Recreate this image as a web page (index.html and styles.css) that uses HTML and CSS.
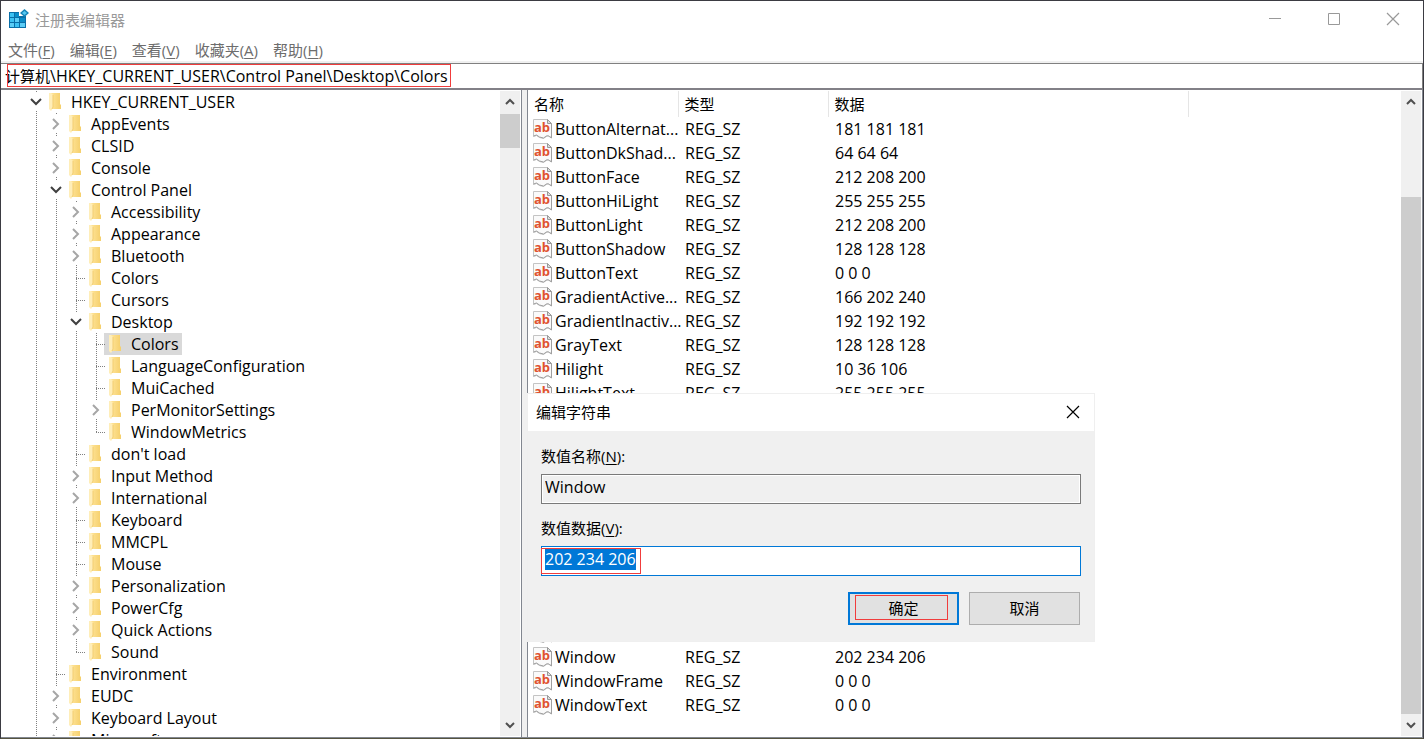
FILE: index.html
```html
<!DOCTYPE html>
<html lang="zh-CN">

<head>
    <meta charset="UTF-8">
    <meta name="viewport" content="width=device-width, initial-scale=1.0">
    <title>注册表编辑器</title>
    <link rel="stylesheet" href="styles.css">
</head>

<body>
    <!-- shared icons -->
    <svg class="defs" aria-hidden="true">
        <linearGradient id="folderFill" x1="0" x2="1" y1="0" y2="0">
            <stop offset="0" stop-color="#ffe498" />
            <stop offset="1" stop-color="#f5cf6b" />
        </linearGradient>
        <symbol id="folder" viewBox="0 0 12 18">
            <path d="M2 0h9v11l1 1v4H2z" fill="url(#folderFill)" />
            <path d="M0 0h2l2 2v13l-2 3-2-2z" fill="#ffeeb9" />
            <path d="M4 2v12l-1 2" fill="none" stroke="#f2cd70" stroke-width="1" />
        </symbol>
        <symbol id="open" viewBox="0 0 12 8">
            <path d="M1 1l5 5 5-5" fill="none" stroke="#404040" stroke-width="2" />
        </symbol>
        <symbol id="closed" viewBox="0 0 8 12">
            <path d="M1 1l5 5-5 5" fill="none" stroke="#a6a6a6" stroke-width="2" />
        </symbol>
        <symbol id="up" viewBox="0 0 10 8">
            <path d="M1 6l4-4 4 4" fill="none" stroke="#505050" stroke-width="2" />
        </symbol>
        <symbol id="down" viewBox="0 0 10 8">
            <path d="M1 2l4 4 4-4" fill="none" stroke="#505050" stroke-width="2" />
        </symbol>
        <symbol id="string" viewBox="0 0 20 20">
            <path d="M.5 .5h14l4 4v14l-2-1-2-1-4 3-4-1-3-2-3 1z" fill="#fafafa" stroke="#c4c4c4" />
            <path d="M18.500 5v14l-3-2-2 0-3 2-4-1-3-2-3 1" fill="none" stroke="#a0a0a0" />
            <path d="M14.500 .5v4h4z" fill="#ddd" stroke="#999" />
            <text x="9" y="13" text-anchor="middle" class="ab">ab</text>
        </symbol>
        <symbol id="close" viewBox="0 0 14 14">
            <path d="M1 1l12 12M13 1L1 13" fill="none" stroke="currentColor" stroke-width="1.200" />
        </symbol>
    </svg>

    <div class="window">
        <header class="titlebar">
            <svg class="app-icon" viewBox="0 0 20 20">
                <path d="M0 3h10v4h7v12H0z" fill="#0a6fa8" />
                <path d="M1 4h4v4H1zM1 9h4v4H1zM6 14h4v4H6z" fill="#3dc1f2" />
                <path d="M6 9h4v4H6zM11 14h5v4h-5zM1 14h4v4H1z" fill="#5ccdf6" />
                <path d="M6 4h4v4H6zM11 9h5v4h-5z" fill="#0a8dc9" />
                <path d="M15.500 0L20 4l-4.500 4L11 4z" fill="#1584b8" />
                <path d="M15.500 2L18 4l-2.500 2L13 4z" fill="#55c8f2" />
            </svg>
            <h1>注册表编辑器</h1>
            <div class="window-buttons">
                <button aria-label="最小化"><svg viewBox="0 0 14 14"><path d="M1 6.500h12" stroke="currentColor" /></svg></button>
                <button aria-label="最大化"><svg viewBox="0 0 14 14"><path d="M1.500 1.500h11v11h-11z" fill="none" stroke="currentColor" /></svg></button>
                <button aria-label="关闭"><svg><use href="#close" /></svg></button>
            </div>
        </header>

        <nav class="menubar">
            <button>文件(<u>F</u>)</button>
            <button>编辑(<u>E</u>)</button>
            <button>查看(<u>V</u>)</button>
            <button>收藏夹(<u>A</u>)</button>
            <button>帮助(<u>H</u>)</button>
        </nav>

        <div class="address">
            <span class="cjk">计算机</span>\HKEY_CURRENT_USER\Control Panel\Desktop\Colors
            <span class="mark mark-address"></span>
        </div>

        <main class="panes">
            <section class="tree-pane">
                <div class="tree-scroll">
                    <ul class="tree">
                        <li><div class="node"><button class="toggle open" aria-label="折叠"><svg><use href="#open" /></svg></button><svg class="folder"><use href="#folder" /></svg><span>HKEY_CURRENT_USER</span></div>
                            <ul>
                                <li><div class="node"><button class="toggle" aria-label="展开"><svg><use href="#closed" /></svg></button><svg class="folder"><use href="#folder" /></svg><span>AppEvents</span></div></li>
                                <li><div class="node"><button class="toggle" aria-label="展开"><svg><use href="#closed" /></svg></button><svg class="folder"><use href="#folder" /></svg><span>CLSID</span></div></li>
                                <li><div class="node"><button class="toggle" aria-label="展开"><svg><use href="#closed" /></svg></button><svg class="folder"><use href="#folder" /></svg><span>Console</span></div></li>
                                <li><div class="node"><button class="toggle open" aria-label="折叠"><svg><use href="#open" /></svg></button><svg class="folder"><use href="#folder" /></svg><span>Control Panel</span></div>
                                    <ul>
                                        <li><div class="node"><button class="toggle" aria-label="展开"><svg><use href="#closed" /></svg></button><svg class="folder"><use href="#folder" /></svg><span>Accessibility</span></div></li>
                                        <li><div class="node"><button class="toggle" aria-label="展开"><svg><use href="#closed" /></svg></button><svg class="folder"><use href="#folder" /></svg><span>Appearance</span></div></li>
                                        <li><div class="node"><button class="toggle" aria-label="展开"><svg><use href="#closed" /></svg></button><svg class="folder"><use href="#folder" /></svg><span>Bluetooth</span></div></li>
                                        <li><div class="node leaf"><svg class="folder"><use href="#folder" /></svg><span>Colors</span></div></li>
                                        <li><div class="node leaf"><svg class="folder"><use href="#folder" /></svg><span>Cursors</span></div></li>
                                        <li><div class="node"><button class="toggle open" aria-label="折叠"><svg><use href="#open" /></svg></button><svg class="folder"><use href="#folder" /></svg><span>Desktop</span></div>
                                            <ul>
                                                <li><div class="node leaf selected"><svg class="folder"><use href="#folder" /></svg><span>Colors</span></div></li>
                                                <li><div class="node leaf"><svg class="folder"><use href="#folder" /></svg><span>LanguageConfiguration</span></div></li>
                                                <li><div class="node leaf"><svg class="folder"><use href="#folder" /></svg><span>MuiCached</span></div></li>
                                                <li><div class="node"><button class="toggle" aria-label="展开"><svg><use href="#closed" /></svg></button><svg class="folder"><use href="#folder" /></svg><span>PerMonitorSettings</span></div></li>
                                                <li><div class="node leaf"><svg class="folder"><use href="#folder" /></svg><span>WindowMetrics</span></div></li>
                                            </ul>
                                        </li>
                                        <li><div class="node leaf"><svg class="folder"><use href="#folder" /></svg><span>don't load</span></div></li>
                                        <li><div class="node"><button class="toggle" aria-label="展开"><svg><use href="#closed" /></svg></button><svg class="folder"><use href="#folder" /></svg><span>Input Method</span></div></li>
                                        <li><div class="node"><button class="toggle" aria-label="展开"><svg><use href="#closed" /></svg></button><svg class="folder"><use href="#folder" /></svg><span>International</span></div></li>
                                        <li><div class="node leaf"><svg class="folder"><use href="#folder" /></svg><span>Keyboard</span></div></li>
                                        <li><div class="node leaf"><svg class="folder"><use href="#folder" /></svg><span>MMCPL</span></div></li>
                                        <li><div class="node leaf"><svg class="folder"><use href="#folder" /></svg><span>Mouse</span></div></li>
                                        <li><div class="node"><button class="toggle" aria-label="展开"><svg><use href="#closed" /></svg></button><svg class="folder"><use href="#folder" /></svg><span>Personalization</span></div></li>
                                        <li><div class="node"><button class="toggle" aria-label="展开"><svg><use href="#closed" /></svg></button><svg class="folder"><use href="#folder" /></svg><span>PowerCfg</span></div></li>
                                        <li><div class="node"><button class="toggle" aria-label="展开"><svg><use href="#closed" /></svg></button><svg class="folder"><use href="#folder" /></svg><span>Quick Actions</span></div></li>
                                        <li><div class="node leaf"><svg class="folder"><use href="#folder" /></svg><span>Sound</span></div></li>
                                    </ul>
                                </li>
                                <li><div class="node leaf"><svg class="folder"><use href="#folder" /></svg><span>Environment</span></div></li>
                                <li><div class="node"><button class="toggle" aria-label="展开"><svg><use href="#closed" /></svg></button><svg class="folder"><use href="#folder" /></svg><span>EUDC</span></div></li>
                                <li><div class="node"><button class="toggle" aria-label="展开"><svg><use href="#closed" /></svg></button><svg class="folder"><use href="#folder" /></svg><span>Keyboard Layout</span></div></li>
                                <li><div class="node"><button class="toggle" aria-label="展开"><svg><use href="#closed" /></svg></button><svg class="folder"><use href="#folder" /></svg><span>Microsoft</span></div></li>
                            </ul>
                        </li>
                    </ul>
                </div>
                <div class="scrollbar">
                    <button aria-label="向上滚动"><svg><use href="#up" /></svg></button>
                    <div class="track"><div class="thumb thumb-tree"></div></div>
                    <button aria-label="向下滚动"><svg><use href="#down" /></svg></button>
                </div>
            </section>

            <section class="list-pane">
                <div class="list-scroll">
                    <table class="values">
                        <colgroup>
                            <col class="col-name">
                            <col class="col-type">
                            <col class="col-data">
                            <col>
                        </colgroup>
                        <thead>
                            <tr><th>名称</th><th>类型</th><th>数据</th><td></td></tr>
                        </thead>
                        <tbody>
                            <tr><td><svg><use href="#string" /></svg>ButtonAlternat...</td><td>REG_SZ</td><td>181 181 181</td></tr>
                            <tr><td><svg><use href="#string" /></svg>ButtonDkShad...</td><td>REG_SZ</td><td>64 64 64</td></tr>
                            <tr><td><svg><use href="#string" /></svg>ButtonFace</td><td>REG_SZ</td><td>212 208 200</td></tr>
                            <tr><td><svg><use href="#string" /></svg>ButtonHiLight</td><td>REG_SZ</td><td>255 255 255</td></tr>
                            <tr><td><svg><use href="#string" /></svg>ButtonLight</td><td>REG_SZ</td><td>212 208 200</td></tr>
                            <tr><td><svg><use href="#string" /></svg>ButtonShadow</td><td>REG_SZ</td><td>128 128 128</td></tr>
                            <tr><td><svg><use href="#string" /></svg>ButtonText</td><td>REG_SZ</td><td>0 0 0</td></tr>
                            <tr><td><svg><use href="#string" /></svg>GradientActive...</td><td>REG_SZ</td><td>166 202 240</td></tr>
                            <tr><td><svg><use href="#string" /></svg>GradientInactiv...</td><td>REG_SZ</td><td>192 192 192</td></tr>
                            <tr><td><svg><use href="#string" /></svg>GrayText</td><td>REG_SZ</td><td>128 128 128</td></tr>
                            <tr><td><svg><use href="#string" /></svg>Hilight</td><td>REG_SZ</td><td>10 36 106</td></tr>
                            <tr><td><svg><use href="#string" /></svg>HilightText</td><td>REG_SZ</td><td>255 255 255</td></tr>
                            <tr class="behind"><td colspan="3"></td></tr>
                            <tr><td><svg><use href="#string" /></svg>TitleText</td><td>REG_SZ</td><td>255 255 255</td></tr>
                            <tr><td><svg><use href="#string" /></svg>Window</td><td>REG_SZ</td><td>202 234 206</td></tr>
                            <tr><td><svg><use href="#string" /></svg>WindowFrame</td><td>REG_SZ</td><td>0 0 0</td></tr>
                            <tr><td><svg><use href="#string" /></svg>WindowText</td><td>REG_SZ</td><td>0 0 0</td></tr>
                        </tbody>
                    </table>
                </div>
                <div class="scrollbar">
                    <button aria-label="向上滚动"><svg><use href="#up" /></svg></button>
                    <div class="track"><div class="thumb thumb-list"></div></div>
                    <button aria-label="向下滚动"><svg><use href="#down" /></svg></button>
                </div>
            </section>
        </main>
    </div>

    <form class="dialog" role="dialog" aria-labelledby="dialogTitle">
        <div class="dialog-title">
            <h2 id="dialogTitle">编辑字符串</h2>
            <button type="button" aria-label="关闭"><svg><use href="#close" /></svg></button>
        </div>
        <div class="dialog-body">
            <label for="valueName">数值名称(<u>N</u>):</label>
            <input type="text" id="valueName" value="Window" readonly>
            <label for="valueData">数值数据(<u>V</u>):</label>
            <div class="field">
                <input type="text" id="valueData" value="202 234 206" autocomplete="off" spellcheck="false">
                <span class="mark mark-data"></span>
            </div>
            <div class="dialog-buttons">
                <button type="button" class="default">确定<span class="mark mark-ok"></span></button>
                <button type="button">取消</button>
            </div>
        </div>
    </form>

    <script src="script.js"></script>
</body>

</html>
```
FILE: styles.css
```css
* {
    box-sizing: border-box;
}

body {
    margin: 0;
    height: 100vh;
    overflow: hidden;
    background-color: #3b3b42;
    color: #000;
    font-family: "Open Sans", "Noto Sans CJK SC", sans-serif;
    font-size: 16px;
}

h1,
h2 {
    margin: 0;
    font-size: 15px;
    font-weight: normal;
}

button {
    margin: 0;
    padding: 0;
    border: none;
    background: none;
    color: inherit;
    font: inherit;
}

svg {
    display: block;
    flex: none;
}

u {
    text-underline-offset: 2px;
}

.defs {
    position: absolute;
    width: 0;
    height: 0;
}

.ab {
    font: bold 13px "Open Sans", sans-serif;
    fill: #e0522f;
}

/* Main window */
.window {
    display: flex;
    flex-direction: column;
    height: 100vh;
    border: 1px solid #3b3b42;
    border-bottom-color: #55533f;
    background-color: #fff;
}

.titlebar {
    display: flex;
    align-items: center;
    height: 36px;
    padding-left: 8px;
    color: #999;
}

.app-icon {
    width: 20px;
    height: 20px;
    margin-right: 6px;
}

.window-buttons {
    display: flex;
    margin-left: auto;
    padding-right: 1px;
}

.window-buttons button {
    display: flex;
    align-items: center;
    justify-content: center;
    width: 59px;
    height: 36px;
}

.window-buttons svg {
    width: 14px;
    height: 14px;
}

.menubar {
    display: flex;
    gap: 15px;
    height: 26px;
    padding-left: 7px;
    border-bottom: 2px solid #f0f0f0;
    color: #6d6d6d;
    font-size: 15px;
}

.address {
    position: relative;
    height: 27px;
    padding-left: 4px;
    border: 1px solid #808080;
    border-bottom: 2px solid #828087;
    border-left: none;
    line-height: 25px;
    white-space: nowrap;
}

.cjk {
    font-size: 15px;
}

/* Red frames */
.mark {
    position: absolute;
    border: 1px solid #f03c3c;
    pointer-events: none;
}

.mark-address {
    top: 0;
    left: 6px;
    width: 444px;
    height: 23px;
}

/* Panes */
.panes {
    display: flex;
    flex: 1;
    gap: 5px;
    min-height: 0;
    border-bottom: 1px solid #828790;
    background-color: #f0f0f0;
}

.tree-pane,
.list-pane {
    display: flex;
    background-color: #fff;
}

.tree-pane {
    flex: 0 0 521px;
    padding: 1px 1px 1px 0;
    border-right: 1px solid #828790;
}

.list-pane {
    flex: 1;
    min-width: 0;
    padding: 1px 1px 1px 0;
    border: 1px solid #828790;
    border-width: 0 1px;
}

.tree-scroll,
.list-scroll {
    flex: 1;
    min-width: 0;
    overflow: hidden;
}

/* Tree */
.tree,
.tree ul {
    margin: 0;
    padding: 0 0 0 20px;
    list-style: none;
}

.tree {
    padding-left: 25px;
}

.tree li {
    background: repeating-linear-gradient(#808080 0 1px, transparent 1px 2px) 10px 0 / 1px 100% no-repeat;
}

.tree ul ul > li:last-child {
    background-size: 1px 12px;
}

.node {
    display: flex;
    align-items: center;
    width: max-content;
    height: 22px;
    line-height: 22px;
    white-space: nowrap;
}

.toggle {
    display: flex;
    align-items: center;
    justify-content: center;
    width: 20px;
    height: 18px;
    background-color: #fff;
}

.toggle svg {
    width: 8px;
    height: 12px;
}

.toggle.open svg {
    width: 12px;
    height: 8px;
}

.leaf::before {
    content: "";
    width: 9px;
    height: 1px;
    margin-left: 10px;
    background: repeating-linear-gradient(90deg, #808080 0 1px, transparent 1px 2px);
}

.folder {
    width: 12px;
    height: 18px;
    margin: 0 10px 0 3px;
}

.leaf .folder {
    margin-left: 4px;
}

.selected {
    padding-right: 3px;
    background: linear-gradient(#d9d9d9, #d9d9d9) 18px 0 / 100% 100% no-repeat;
}

/* Scroll bars */
.scrollbar {
    display: flex;
    flex-direction: column;
    width: 20px;
    background-color: #f0f0f0;
}

.scrollbar button {
    display: flex;
    align-items: center;
    justify-content: center;
    height: 22px;
}

.scrollbar svg {
    width: 10px;
    height: 8px;
}

.track {
    display: flex;
    flex-direction: column;
    flex: 1;
}

.thumb {
    background-color: #cdcdcd;
}

.thumb-tree {
    height: 34px;
    margin-top: 1px;
}

.thumb-list {
    height: 86%;
    margin-top: auto;
}

/* Value list */
.values {
    width: 100%;
    border-collapse: collapse;
    table-layout: fixed;
}

.col-name,
.col-type {
    width: 150px;
}

.col-data {
    width: 360px;
}

.values th,
.values td {
    padding: 0 0 0 7px;
    line-height: 24px;
    text-align: left;
    white-space: nowrap;
}

.values th {
    height: 26px;
    padding-left: 6px;
    border-right: 1px solid #e5e5e5;
    font-size: 15px;
    font-weight: normal;
}

.values tbody td {
    height: 24px;
}

.values td:first-child {
    padding-left: 5px;
}

.values td svg {
    display: inline-block;
    width: 20px;
    height: 20px;
    margin-right: 2px;
    vertical-align: -4px;
}

/* Rows covered by the dialog */
.values .behind td {
    height: 216px;
}

/* Edit string dialog */
.dialog {
    position: absolute;
    top: 393px;
    left: 527px;
    width: 568px;
    border: 1px solid #efefef;
    background-color: #f0f0f0;
    font-size: 15px;
}

.dialog-title {
    display: flex;
    align-items: center;
    justify-content: space-between;
    height: 37px;
    padding: 0 14px 2px 8px;
    background-color: #fff;
}

.dialog-title svg {
    width: 14px;
    height: 14px;
}

.dialog-body {
    display: flex;
    flex-direction: column;
    padding: 14px 13px 16px;
}

.dialog label {
    height: 29px;
    line-height: 22px;
}

.dialog input {
    display: block;
    width: 100%;
    height: 30px;
    margin-bottom: 13px;
    padding: 0 3px 4px;
    border: 1px solid #7a7a7a;
    outline: none;
    background-color: #f0f0f0;
    box-shadow: inset 0 0 0 1px #fff;
    color: #000;
    font: 16px "Open Sans", "Noto Sans CJK SC", sans-serif;
}

.field {
    position: relative;
}

.dialog .field input {
    margin-bottom: 16px;
    border-color: #0078d7;
    background-color: #fff;
}

.field input::selection {
    background-color: #0078d7;
    color: #fff;
}

.mark-data {
    top: 2px;
    left: 0;
    width: 100px;
    height: 26px;
}

.dialog-buttons {
    display: flex;
    justify-content: flex-end;
    gap: 10px;
    padding-right: 1px;
}

.dialog-buttons button {
    position: relative;
    height: 33px;
    width: 111px;
    padding-bottom: 2px;
    border: 1px solid #adadad;
    background-color: #e1e1e1;
}

.dialog-buttons .default {
    border: 2px solid #0078d7;
}

.mark-ok {
    top: 1px;
    left: 5px;
    width: 93px;
    height: 25px;
}
```
FILE: script.js
```js
// Open with the value text selected
const valueData = document.getElementById('valueData');
valueData.focus();
valueData.select();
```
